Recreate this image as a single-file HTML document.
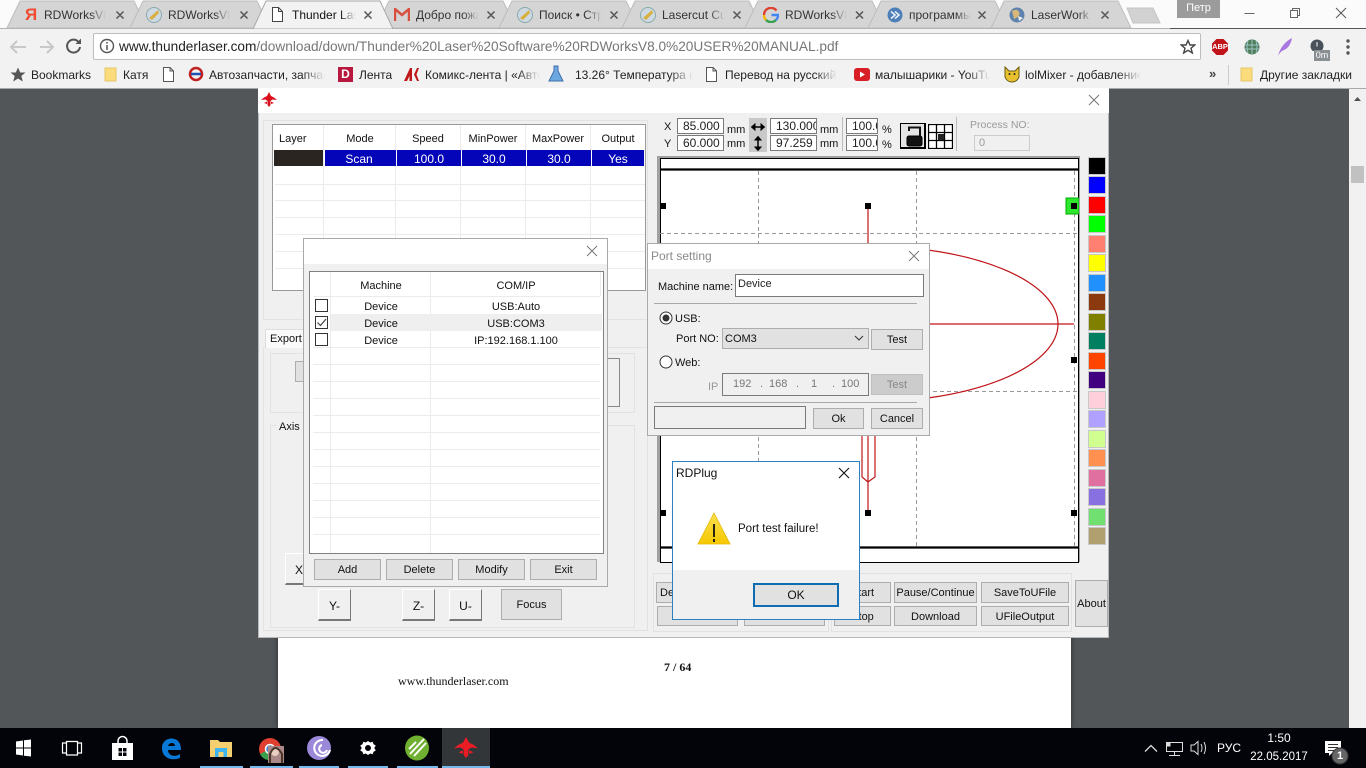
<!DOCTYPE html>
<html><head><meta charset="utf-8"><title>Thunder Laser</title>
<style>
html,body{margin:0;padding:0;width:1366px;height:768px;overflow:hidden;background:#525659}
body{position:relative;font-family:"Liberation Sans","Noto Sans CJK SC",sans-serif;font-size:11px;color:#111}
div,span,svg{position:absolute;box-sizing:border-box}
.t{white-space:nowrap;line-height:14px}
.c{text-align:center}
.b{background:#e1e1e1;border:1px solid #adadad;text-align:center;white-space:nowrap;font-size:11px;color:#111}
.i{background:#fff;border:1px solid #7a7a7a;font-size:12px;line-height:15px;color:#222;white-space:nowrap;overflow:hidden;padding-left:4px}
.tab{font-size:12px;line-height:14px;top:8px;white-space:nowrap;overflow:hidden;color:#333;-webkit-mask-image:linear-gradient(90deg,#000 75%,transparent);mask-image:linear-gradient(90deg,#000 75%,transparent)}
.bm{font-size:12px;line-height:14px;top:68px;white-space:nowrap;overflow:hidden;color:#222}
.f{-webkit-mask-image:linear-gradient(90deg,#000 80%,transparent);mask-image:linear-gradient(90deg,#000 80%,transparent)}
.g3{border:1px solid #e2e2e2}
.m{background:#000;width:6px;height:6px}
.sw{left:1088px;width:18px;height:18px;border:1px solid #c8c8c8}
.x3d{background:#f0f0f0;border-top:1px solid #fff;border-left:1px solid #fff;border-right:1px solid #777;border-bottom:2px solid #777;text-align:center;line-height:32px;font-size:12px}
</style></head><body>

<!-- Chrome frame -->
<div style="left:0;top:0;width:1366px;height:28px;background:#fbfbfb"></div>
<svg style="left:0;top:0" width="1170" height="29" viewBox="0 0 1170 29">
<g fill="#d5d5d5" stroke="#bdbdbd" stroke-width="1">
<path d="M7 28 L20 1 H134 L147 28Z"/>
<path d="M130 28 L143 1 H257 L270 28Z"/>
<path d="M376 28 L389 1 H503 L516 28Z"/>
<path d="M499 28 L512 1 H626 L639 28Z"/>
<path d="M622 28 L635 1 H749 L762 28Z"/>
<path d="M745 28 L758 1 H872 L885 28Z"/>
<path d="M868 28 L881 1 H995 L1008 28Z"/>
<path d="M991 28 L1004 1 H1118 L1131 28Z"/>
<path d="M1127 8 H1153 L1160 23 H1133Z" fill="#d2d2d2" stroke="#c4c4c4"/>
</g>
<path d="M0 28.500H1170" stroke="#b4b4b4"/>
<path d="M253 29 L266 1 H380 L393 29Z" fill="#f2f2f2" stroke="#a8a8a8"/>
</svg>
<!-- tab icons -->
<div class="t" style="left:25px;top:6px;font-size:17px;line-height:18px;color:#f04a30;font-weight:bold">Я</div>
<svg style="left:146px;top:7px" width="16" height="16"><circle cx="8" cy="8" r="7.500" fill="#cfd9e4" stroke="#8aa"/><path d="M3 11 L12 3 L13 6 L6 13Z" fill="#d8b040"/></svg>
<svg style="left:270px;top:7px" width="14" height="16"><path d="M2.500.5H8.500L12.500 4.500V14.500H2.500Z M8.500.5V4.500H12.500" fill="#fff" stroke="#444"/></svg>
<svg style="left:394px;top:8px" width="16" height="13"><path d="M1 13V1L8 7L15 1V13" fill="none" stroke="#d85040" stroke-width="2.500"/></svg>
<svg style="left:517px;top:7px" width="16" height="16"><circle cx="8" cy="8" r="7.500" fill="#cfd9e4" stroke="#8aa"/><path d="M3 11 L12 3 L13 6 L6 13Z" fill="#d8b040"/></svg>
<svg style="left:640px;top:7px" width="16" height="16"><circle cx="8" cy="8" r="7.500" fill="#cfd9e4" stroke="#8aa"/><path d="M3 11 L12 3 L13 6 L6 13Z" fill="#d8b040"/></svg>
<svg style="left:763px;top:7px" width="16" height="16" viewBox="0 0 16 16"><path d="M13.500 3.500A7 7 0 0 0 1 8" fill="none" stroke="#e04030" stroke-width="2.400"/><path d="M1 8A7 7 0 0 0 3 13" fill="none" stroke="#f4b400" stroke-width="2.400"/><path d="M3 13A7 7 0 0 0 13 13" fill="none" stroke="#34a050" stroke-width="2.400"/><path d="M13 13A7 7 0 0 0 15 8H8.500" fill="none" stroke="#4285f4" stroke-width="2.400"/></svg>
<svg style="left:887px;top:7px" width="16" height="16"><circle cx="8" cy="8" r="7.500" fill="#4f7fb8"/><path d="M4 4.500L8 8L4 11.500M8 4.500L12 8L8 11.500" fill="none" stroke="#e8eef8" stroke-width="1.600"/></svg>
<svg style="left:1009px;top:7px" width="16" height="16"><circle cx="8" cy="8" r="7.500" fill="#5f83ac"/><path d="M3 4Q8 1 10 5T5 12Z" fill="#d8b878"/><path d="M9 9L14 11L10 14Z" fill="#eee"/></svg>
<!-- tab text -->
<span class="tab" style="left:44px;width:62px">RDWorksV8.0</span>
<span class="tab" style="left:168px;width:62px">RDWorksV8.0</span>
<span class="tab" style="left:292px;width:64px;color:#111">Thunder Laser</span>
<span class="tab" style="left:416px;width:63px">Добро пожаловать</span>
<span class="tab" style="left:539px;width:63px">Поиск • Страницы</span>
<span class="tab" style="left:662px;width:63px">Lasercut Cut</span>
<span class="tab" style="left:785px;width:62px">RDWorksV8.0</span>
<span class="tab" style="left:909px;width:62px">программы для</span>
<span class="tab" style="left:1031px;width:62px">LaserWork 6</span>
<svg style="left:0;top:0" width="1120" height="28">
<g stroke="#555" stroke-width="1.500" fill="none">
<path d="M116.500 11.500l7 7m0-7l-7 7M240.500 11.500l7 7m0-7l-7 7M364.500 11.500l7 7m0-7l-7 7M487.500 11.500l7 7m0-7l-7 7M610.500 11.500l7 7m0-7l-7 7M733.500 11.500l7 7m0-7l-7 7M856 11.500l7 7m0-7l-7 7M978.500 11.500l7 7m0-7l-7 7M1101.500 11.500l7 7m0-7l-7 7"/>
</g></svg>
<!-- user + window controls -->
<div class="c" style="left:1177px;top:0;width:43px;height:18px;background:#9b9b9b;color:#fff;font-size:11px;line-height:17px">Петр</div>
<svg style="left:1230px;top:0" width="130" height="26" fill="none" stroke="#666"><path d="M14.500 13.500H24.500"/><path d="M60.500 10.500V17.500H67.500V10.500ZM62.500 10.500V8.500H69.500V15.500H67.500"/><path d="M106 8L116 18M116 8L106 18" stroke="#555"/></svg>

<!-- Toolbar -->
<div style="left:0;top:29px;width:1366px;height:59px;background:#f2f2f2"></div>
<div style="left:0;top:88px;width:1366px;height:1px;background:#a8a8a8"></div>
<svg style="left:0;top:30px" width="90" height="30" fill="none"><path d="M26 17H12M17 11L11 17L17 23" stroke="#c8c8c8" stroke-width="2"/><path d="M40 17H53M47 11L53 17L47 23" stroke="#c8c8c8" stroke-width="2"/><path d="M79 12.500A6.500 6.500 0 1 0 80 17" stroke="#555" stroke-width="2"/><path d="M81 8.500V14H75.500Z" fill="#555"/></svg>
<div style="left:93px;top:33px;width:1108px;height:27px;background:#fff;border:1px solid #bdbdbd;border-radius:2px"></div>
<svg style="left:99px;top:38px" width="16" height="16"><circle cx="8" cy="8" r="6.500" fill="none" stroke="#555" stroke-width="1.400"/><path d="M8 7V12M8 4V5.600" stroke="#555" stroke-width="1.500"/></svg>
<div class="t" id="url" style="left:119px;top:38px;font-size:13.670px;line-height:17px;color:#777"><span style="position:static;color:#222">www.thunderlaser.com</span>/download/down/Thunder%20Laser%20Software%20RDWorksV8.0%20USER%20MANUAL.pdf</div>
<svg style="left:1180px;top:39px" width="16" height="16"><path d="M8 1.500L10 6H14.800L11 9.200L12.300 14L8 11.300L3.700 14L5 9.200L1.200 6H6Z" fill="none" stroke="#444" stroke-width="1.400"/></svg>
<svg style="left:1211px;top:38px" width="18" height="18"><path d="M5.500 1H12.500L17 5.500V12.500L12.500 17H5.500L1 12.500V5.500Z" fill="#c0141a"/></svg>
<div class="c" style="left:1211px;top:42px;width:18px;color:#fff;font-size:7.500px;font-weight:bold;line-height:10px">ABP</div>
<svg style="left:1244px;top:39px" width="16" height="16"><circle cx="8" cy="8" r="7.500" fill="#4f7f5a"/><path d="M1 6H15M1 10H15M8 1V15M4 2Q2 8 4 14M12 2Q14 8 12 14" stroke="#9fc0c8" fill="none"/></svg>
<svg style="left:1277px;top:37px" width="16" height="20"><path d="M15 1C9 4 3 10 1 19C3 15 5 14 7 13C12 11 14 6 15 1Z" fill="#a878e0"/></svg>
<svg style="left:1310px;top:39px" width="16" height="12"><circle cx="7" cy="7" r="6.500" fill="#49525a"/><path d="M7 3V7.500" stroke="#fff"/></svg>
<div class="c" style="left:1314px;top:50px;width:16px;height:11px;background:#8a8f94;color:#fff;font-size:9px;line-height:11px">0m</div>
<svg style="left:1346px;top:38px" width="4" height="18"><circle cx="2" cy="3" r="1.700" fill="#555"/><circle cx="2" cy="9" r="1.700" fill="#555"/><circle cx="2" cy="15" r="1.700" fill="#555"/></svg>

<!-- Bookmarks -->
<svg style="left:10px;top:67px" width="16" height="15"><path d="M8 .5L10.200 5.500H15.500L11.300 9L12.800 14.500L8 11.500L3.200 14.500L4.700 9L.5 5.500H5.800Z" fill="#555"/></svg>
<span class="bm" style="left:31px">Bookmarks</span>
<svg style="left:104px;top:67px" width="13" height="15"><path d="M1 1H9V1H12V14H1Z" fill="#fbdc7c" stroke="#e6c468"/></svg>
<span class="bm" style="left:123px">Катя</span>
<svg style="left:162px;top:67px" width="13" height="15"><path d="M1.500.5H8L11.500 4V14.500H1.500ZM8 .5V4H11.500" fill="#fff" stroke="#555"/></svg>
<svg style="left:188px;top:66px" width="16" height="16"><circle cx="8" cy="8" r="6" fill="none" stroke="#c02020" stroke-width="2.500"/><path d="M3 8H13" stroke="#2050b0" stroke-width="2.500"/></svg>
<span class="bm f" style="left:209px;width:116px">Автозапчасти, запчасти</span>
<div style="left:338px;top:67px;width:15px;height:15px;background:#b81840;color:#fff;font-size:12px;font-weight:bold;line-height:15px;text-align:center">D</div>
<span class="bm" style="left:359px">Лента</span>
<svg style="left:404px;top:68px" width="16" height="13"><path d="M0 13L6 0H8V13H5.500V8L3 13ZM15 0H13L10 6.500L13 13H15L12.500 6.500Z" fill="#c01818"/></svg>
<span class="bm f" style="left:425px;width:115px">Комикс-лента | «Автор»</span>
<svg style="left:548px;top:65px" width="16" height="18"><path d="M6 1H10V6L15 16H1L6 6Z" fill="#6ea8e0" stroke="#3d6ea8"/></svg>
<span class="bm f" style="left:575px;width:118px">13.26° Температура в городе</span>
<svg style="left:705px;top:67px" width="13" height="15"><path d="M1.500.5H8L11.500 4V14.500H1.500ZM8 .5V4H11.500" fill="#fff" stroke="#555"/></svg>
<span class="bm f" style="left:725px;width:112px">Перевод на русский</span>
<svg style="left:854px;top:68px" width="16" height="13"><rect width="16" height="13" rx="3" fill="#d81f26"/><path d="M6 3.500V9.500L11 6.500Z" fill="#fff"/></svg>
<span class="bm f" style="left:875px;width:115px">малышарики - YouTube</span>
<svg style="left:1004px;top:66px" width="16" height="17"><path d="M1 1L5 5H11L15 1V11Q13 16 8 16T1 11Z" fill="#e8c030" stroke="#6a5a10"/><circle cx="5.500" cy="8" r="1" fill="#222"/><circle cx="10.500" cy="8" r="1" fill="#222"/></svg>
<span class="bm f" style="left:1025px;width:116px">lolMixer - добавление</span>
<div class="t" style="left:1209px;top:67px;font-size:13px;font-weight:bold;color:#444">»</div>
<div style="left:1228px;top:65px;width:1px;height:20px;background:#ccc"></div>
<svg style="left:1240px;top:67px" width="13" height="15"><path d="M1 1H9V1H12V14H1Z" fill="#fbdc7c" stroke="#e6c468"/></svg>
<span class="bm" style="left:1260px">Другие закладки</span>

<!-- PDF page -->
<div style="left:278px;top:630px;width:793px;height:98px;background:#fff;box-shadow:0 0 5px rgba(0,0,0,.5)"></div>
<div class="t" style="left:664px;top:660px;font:bold 12px/14px 'Liberation Serif',serif;color:#111">7 / 64</div>
<div class="t" style="left:398px;top:674px;font:12px/14px 'Liberation Serif',serif;color:#111">www.thunderlaser.com</div>
<!-- scrollbar -->
<div style="left:1349px;top:89px;width:17px;height:639px;background:#f1f1f1"></div>
<svg style="left:1353px;top:96px" width="9" height="6"><path d="M4.500 1L8 5H1Z" fill="#505050"/></svg>
<div style="left:1351px;top:166px;width:13px;height:17px;background:#c1c1c1"></div>

<!-- RDWorks main window -->
<div style="left:258px;top:88px;width:851px;height:550px;background:#f0f0f0;border:1px solid #b8b8b8;border-top:0"></div>
<div style="left:258px;top:88px;width:851px;height:25px;background:#fff"></div>
<svg style="left:261px;top:92px" width="16" height="15" viewBox="0 0 16 15"><path d="M8 0L10 4L13 5.500L16 8L11.500 7.500L9.500 9L9.500 13L8 15L6.500 13L6.500 9L4.500 7.500L0 8L3 5.500L6 4Z" fill="#d8101c"/><path d="M3 11L6 9.500V12ZM13 11L10 9.500V12Z" fill="#d8101c"/></svg>
<svg style="left:1088px;top:94px" width="12" height="12"><path d="M1 1L11 11M11 1L1 11" stroke="#777" fill="none"/></svg>

<!-- left top group & table -->
<div class="g3" style="left:263px;top:120px;width:385px;height:200px"></div>
<div style="left:272px;top:124px;width:374px;height:167px;background:#fff;border:1px solid #999"></div>
<svg style="left:273px;top:125px" width="372" height="165">
<g stroke="#ebebeb"><path d="M50.500 0V165M122.500 0V165M187.500 0V165M252.500 0V165M317.500 0V165"/><path d="M2 59.500H372M2 75.500H372M2 92.500H372M2 109.500H372M2 126.500H372M2 143.500H372"/></g>
</svg>
<div class="t" style="left:279px;top:132px">Layer</div>
<div class="t c" style="left:324px;top:132px;width:72px">Mode</div>
<div class="t c" style="left:396px;top:132px;width:64px">Speed</div>
<div class="t c" style="left:461px;top:132px;width:64px">MinPower</div>
<div class="t c" style="left:526px;top:132px;width:64px">MaxPower</div>
<div class="t c" style="left:591px;top:132px;width:54px">Output</div>
<div style="left:274px;top:150px;width:49px;height:16px;background:#2b2522"></div>
<div style="left:325px;top:150px;width:319px;height:16px;background:#0404b8"></div>
<div style="left:396px;top:150px;width:1px;height:16px;background:#fff"></div>
<div style="left:461px;top:150px;width:1px;height:16px;background:#fff"></div>
<div style="left:526px;top:150px;width:1px;height:16px;background:#fff"></div>
<div style="left:591px;top:150px;width:1px;height:16px;background:#fff"></div>
<div class="t c" style="left:325px;top:152px;width:68px;color:#fff;font-size:12px">Scan</div>
<div class="t c" style="left:397px;top:152px;width:64px;color:#fff;font-size:12px">100.0</div>
<div class="t c" style="left:462px;top:152px;width:64px;color:#fff;font-size:12px">30.0</div>
<div class="t c" style="left:527px;top:152px;width:64px;color:#fff;font-size:12px">30.0</div>
<div class="t c" style="left:592px;top:152px;width:52px;color:#fff;font-size:12px">Yes</div>

<!-- left bottom panels -->
<div class="g3" style="left:263px;top:347px;width:385px;height:284px"></div>
<div style="left:265px;top:329px;width:42px;height:19px;background:#fafafa;border:1px solid #ddd;border-bottom:0"></div>
<div class="t" style="left:270px;top:332px">Export</div>
<div class="g3" style="left:270px;top:353px;width:365px;height:60px"></div>
<div style="left:295px;top:361px;width:20px;height:21px;background:#e1e1e1;border:1px solid #adadad"></div>
<div style="left:605px;top:358px;width:15px;height:49px;background:#f0f0f0;border:1px solid #888"></div>
<div class="g3" style="left:270px;top:425px;width:365px;height:203px"></div>
<div class="t" style="left:277px;top:420px;padding:0 2px;background:#f0f0f0">Axis Move</div>
<div class="x3d" style="left:285px;top:553px;width:33px;height:32px;text-align:left;padding-left:9px">X-</div>
<div class="x3d" style="left:318px;top:589px;width:33px;height:32px">Y-</div>
<div class="x3d" style="left:402px;top:589px;width:33px;height:32px">Z-</div>
<div class="x3d" style="left:449px;top:589px;width:33px;height:32px">U-</div>
<div class="b" style="left:501px;top:589px;width:61px;height:31px;line-height:31px">Focus</div>

<!-- Right top controls -->
<div class="t" style="left:664px;top:120px">X</div>
<div class="t" style="left:664px;top:137px">Y</div>
<div class="i" style="left:677px;top:118px;width:47px;height:16px;padding-left:5px">85.000</div>
<div class="i" style="left:677px;top:135px;width:47px;height:16px;padding-left:5px">60.000</div>
<div class="t" style="left:727px;top:123px">mm</div>
<div class="t" style="left:727px;top:137px">mm</div>
<div style="left:749px;top:118px;width:18px;height:34px;background:#c9c9c9"></div>
<svg style="left:749px;top:118px" width="18" height="34" fill="#000" stroke="#000"><path d="M4 9H14" stroke-width="1.500"/><path d="M6 6L2.500 9L6 12ZM12 6L15.500 9L12 12Z"/><path d="M9 21V31" stroke-width="1.500"/><path d="M6 22L9 18.500L12 22ZM6 29L9 32.500L12 29Z"/></svg>
<div class="i" style="left:770px;top:118px;width:47px;height:16px;padding-left:5px">130.000</div>
<div class="i" style="left:770px;top:135px;width:47px;height:16px;padding-left:5px">97.259</div>
<div class="t" style="left:820px;top:123px">mm</div>
<div class="t" style="left:820px;top:137px">mm</div>
<div style="left:842px;top:117px;width:1px;height:34px;background:#bbb"></div>
<div class="i" style="left:846px;top:118px;width:32px;height:16px;padding-left:5px">100.00</div>
<div class="i" style="left:846px;top:135px;width:32px;height:16px;padding-left:5px">100.00</div>
<div class="t" style="left:882px;top:123px">%</div>
<div class="t" style="left:882px;top:138px">%</div>
<div style="left:900px;top:123px;width:26px;height:26px;background:#e4e4e4;border:1px solid #000;border-right-width:2px;border-bottom-width:2px"></div>
<svg style="left:900px;top:123px" width="26" height="26"><rect x="7" y="13" width="15" height="10" rx="2" fill="#111" stroke="#000"/><path d="M9 8V4.500H20V13" fill="none" stroke="#111" stroke-width="2"/></svg>
<svg style="left:928px;top:124px" width="25" height="25"><rect width="25" height="25" fill="#fff"/><path d="M.5.5H24.500V24.500H.5ZM8.500.5V24.500M16.500.5V24.500M.5 8.500H24.500M.5 16.500H24.500" fill="none" stroke="#000" stroke-width="1.300"/><rect x="10" y="10" width="6" height="6" fill="#222"/></svg>
<div style="left:956px;top:117px;width:1px;height:34px;background:#bbb"></div>
<div class="t" style="left:970px;top:118px;color:#9a9a9a;font-size:10.500px">Process NO:</div>
<div style="left:974px;top:135px;width:56px;height:16px;background:#f0f0f0;border:1px solid #ccc;color:#999;font-size:11px;line-height:15px;padding-left:4px">0</div>

<!-- Canvas -->
<div style="left:657px;top:156px;width:423px;height:406px;background:#a0a0a0"></div>
<div style="left:660px;top:158px;width:419px;height:405px;background:#fff;border:1px solid #000;border-width:1px"></div>
<svg style="left:660px;top:158px" width="419" height="405">
<path d="M0 11.500H419M0 389.500H419" stroke="#000" stroke-width="2.200"/>
<g stroke="#999" stroke-dasharray="4 3" fill="none"><path d="M98.500 13V388M256.500 13V390M414.500 13V388M0 75.500H419M0 233.500H419"/></g>
<g fill="none" stroke="#c01418" stroke-width="1.200"><ellipse cx="208" cy="166" rx="190" ry="78"/><path d="M208 48V88M18 166H414"/><path d="M202 270V319L208 324L215 319V270M208 270V355"/></g>
<rect x="406" y="40" width="13" height="16" fill="#2ee82e" stroke="#0a0"/>
</svg>
<div class="m" style="left:660px;top:203px"></div><div class="m" style="left:865px;top:203px"></div><div class="m" style="left:1071px;top:203px"></div>
<div class="m" style="left:1071px;top:357px"></div>
<div class="m" style="left:660px;top:510px"></div><div class="m" style="left:865px;top:510px"></div><div class="m" style="left:1071px;top:510px"></div>

<!-- Palette -->
<div class="sw" style="top:157px;background:#000"></div>
<div class="sw" style="top:176px;background:#0000ff"></div>
<div class="sw" style="top:196px;background:#ff0000"></div>
<div class="sw" style="top:215px;background:#00ff00"></div>
<div class="sw" style="top:235px;background:#ff8070"></div>
<div class="sw" style="top:254px;background:#ffff00"></div>
<div class="sw" style="top:274px;background:#2090ff"></div>
<div class="sw" style="top:293px;background:#8b3a10"></div>
<div class="sw" style="top:313px;background:#808000"></div>
<div class="sw" style="top:332px;background:#008060"></div>
<div class="sw" style="top:352px;background:#ff4500"></div>
<div class="sw" style="top:371px;background:#400080"></div>
<div class="sw" style="top:391px;background:#ffd0dc"></div>
<div class="sw" style="top:410px;background:#b0a0ff"></div>
<div class="sw" style="top:430px;background:#d0ff90"></div>
<div class="sw" style="top:449px;background:#ff9050"></div>
<div class="sw" style="top:469px;background:#e070a0"></div>
<div class="sw" style="top:488px;background:#8870e0"></div>
<div class="sw" style="top:508px;background:#70e070"></div>
<div class="sw" style="top:527px;background:#b0a070"></div>

<!-- bottom right buttons -->
<div class="g3" style="left:653px;top:573px;width:176px;height:59px"></div>
<div class="g3" style="left:831px;top:573px;width:241px;height:59px"></div>
<div class="b" style="left:656px;top:582px;width:60px;height:21px;line-height:21px;text-align:left;padding-left:3px">Dev</div>
<div class="b" style="left:657px;top:606px;width:81px;height:20px"></div>
<div class="b" style="left:744px;top:606px;width:81px;height:20px"></div>
<div class="b" style="left:834px;top:582px;width:57px;height:21px;line-height:21px">Start</div>
<div class="b" style="left:834px;top:606px;width:57px;height:20px;line-height:20px">Stop</div>
<div class="b" style="left:894px;top:582px;width:83px;height:21px;line-height:21px">Pause/Continue</div>
<div class="b" style="left:894px;top:606px;width:83px;height:20px;line-height:20px">Download</div>
<div class="b" style="left:981px;top:582px;width:88px;height:21px;line-height:21px">SaveToUFile</div>
<div class="b" style="left:981px;top:606px;width:88px;height:20px;line-height:20px">UFileOutput</div>
<div class="b" style="left:1075px;top:580px;width:33px;height:47px;line-height:47px">About</div>

<!-- Machine dialog -->
<div style="left:303px;top:238px;width:305px;height:349px;background:#f0f0f0;border:1px solid #aaa"></div>
<div style="left:304px;top:239px;width:303px;height:25px;background:#fff"></div>
<svg style="left:586px;top:245px" width="12" height="12"><path d="M1 1L11 11M11 1L1 11" stroke="#777"/></svg>
<div style="left:309px;top:271px;width:295px;height:283px;background:#fff;border:1px solid #808080"></div>
<svg style="left:310px;top:272px" width="293" height="281"><g stroke="#ebebeb"><path d="M20.500 0V281M120.500 0V281M290.500 0V24"/><path d="M3 24.500H290M3 75.500H290M3 92.500H290M3 109.500H290M3 126.500H290M3 143.500H290M3 160.500H290M3 177.500H290M3 194.500H290M3 211.500H290M3 228.500H290M3 245.500H290M3 262.500H290"/></g></svg>
<div style="left:331px;top:314px;width:271px;height:17px;background:#efefef"></div>
<div class="t c" style="left:331px;top:279px;width:100px">Machine</div>
<div class="t c" style="left:431px;top:279px;width:170px">COM/IP</div>
<div class="t c" style="left:331px;top:300px;width:100px">Device</div>
<div class="t c" style="left:331px;top:317px;width:100px">Device</div>
<div class="t c" style="left:331px;top:334px;width:100px">Device</div>
<div class="t c" style="left:431px;top:300px;width:170px">USB:Auto</div>
<div class="t c" style="left:431px;top:317px;width:170px">USB:COM3</div>
<div class="t c" style="left:431px;top:334px;width:170px">IP:192.168.1.100</div>
<div style="left:315px;top:299px;width:13px;height:13px;background:#fff;border:1px solid #333"></div>
<div style="left:315px;top:316px;width:13px;height:13px;background:#fff;border:1px solid #333"></div>
<div style="left:315px;top:333px;width:13px;height:13px;background:#fff;border:1px solid #333"></div>
<svg style="left:315px;top:316px" width="13" height="13"><path d="M2.500 6.500L5.500 9.500L11 3" fill="none" stroke="#444" stroke-width="1.200"/></svg>
<div class="b" style="left:314px;top:559px;width:67px;height:21px;line-height:21px">Add</div>
<div class="b" style="left:386px;top:559px;width:67px;height:21px;line-height:21px">Delete</div>
<div class="b" style="left:458px;top:559px;width:67px;height:21px;line-height:21px">Modify</div>
<div class="b" style="left:530px;top:559px;width:67px;height:21px;line-height:21px">Exit</div>

<!-- Port setting dialog -->
<div style="left:647px;top:243px;width:283px;height:193px;background:#f0f0f0;border:1px solid #aaa"></div>
<div style="left:648px;top:244px;width:281px;height:25px;background:#fff"></div>
<div class="t" style="left:651px;top:249px;font-size:12px;color:#8a8a8a">Port setting</div>
<svg style="left:908px;top:250px" width="12" height="12"><path d="M1 1L11 11M11 1L1 11" stroke="#777"/></svg>
<div class="t" style="left:658px;top:280px">Machine name:</div>
<div class="i" style="left:735px;top:274px;width:189px;height:23px;line-height:19px;padding-left:2px;font-size:11px">Device</div>
<div style="left:654px;top:303px;width:263px;height:1px;background:#a8a8a8"></div>
<svg style="left:659px;top:311px" width="14" height="14"><circle cx="7" cy="7" r="6" fill="#fff" stroke="#333"/><circle cx="7" cy="7" r="3.500" fill="#333"/></svg>
<div class="t" style="left:675px;top:312px">USB:</div>
<div class="t" style="left:676px;top:332px">Port NO:</div>
<div style="left:722px;top:328px;width:147px;height:21px;background:#e1e1e1;border:1px solid #adadad"></div>
<div class="t" style="left:725px;top:332px">COM3</div>
<svg style="left:854px;top:335px" width="10" height="7"><path d="M1 1L5 5L9 1" fill="none" stroke="#333"/></svg>
<div class="b" style="left:871px;top:329px;width:52px;height:21px;line-height:21px">Test</div>
<svg style="left:659px;top:355px" width="14" height="14"><circle cx="7" cy="7" r="6" fill="#fff" stroke="#333"/></svg>
<div class="t" style="left:675px;top:356px">Web:</div>
<div class="t" style="left:708px;top:380px;color:#999">IP</div>
<div style="left:722px;top:373px;width:147px;height:23px;background:#f0f0f0;border:1px solid #7a7a7a"></div>
<div class="t" style="left:733px;top:377px;color:#777">192</div>
<div class="t" style="left:760px;top:377px;color:#777">.</div>
<div class="t" style="left:769px;top:377px;color:#777">168</div>
<div class="t" style="left:796px;top:377px;color:#777">.</div>
<div class="t" style="left:811px;top:377px;color:#777">1</div>
<div class="t" style="left:832px;top:377px;color:#777">.</div>
<div class="t" style="left:841px;top:377px;color:#777">100</div>
<div class="b" style="left:871px;top:374px;width:52px;height:21px;line-height:21px;background:#ccc;border-color:#bfbfbf;color:#888">Test</div>
<div style="left:654px;top:402px;width:263px;height:1px;background:#a8a8a8"></div>
<div style="left:654px;top:406px;width:152px;height:23px;background:#f0f0f0;border:1px solid #7a7a7a"></div>
<div class="b" style="left:813px;top:408px;width:51px;height:21px;line-height:21px">Ok</div>
<div class="b" style="left:871px;top:408px;width:52px;height:21px;line-height:21px">Cancel</div>

<!-- RDPlug message box -->
<div style="left:672px;top:461px;width:188px;height:159px;background:#f0f0f0;border:1px solid #2a80c0"></div>
<div style="left:673px;top:462px;width:186px;height:108px;background:#fff"></div>
<div class="t" style="left:676px;top:466px;font-size:12px">RDPlug</div>
<svg style="left:838px;top:467px" width="12" height="12"><path d="M1 1L11 11M11 1L1 11" stroke="#111" stroke-width="1.100"/></svg>
<svg style="left:697px;top:511px" width="34" height="34" viewBox="0 0 34 34"><defs><linearGradient id="w" x1="0" y1="0" x2="0" y2="1"><stop offset="0" stop-color="#fbe050"/><stop offset="1" stop-color="#f5c800"/></linearGradient></defs><path d="M17 2L33 33H1Z" fill="url(#w)" stroke="#e6b800" stroke-width=".8"/><path d="M17 13V26M17 28V31" stroke="#111" stroke-width="1.800"/></svg>
<div class="t" style="left:738px;top:522px;font-size:11.500px">Port test failure!</div>
<div class="b" style="left:753px;top:583px;width:86px;height:24px;border:2px solid #0f6cb0;line-height:21px;font-size:12px">OK</div>

<!-- Taskbar -->
<div style="left:0;top:728px;width:1366px;height:40px;background:#030409"></div>
<div style="left:442px;top:728px;width:48px;height:40px;background:#333639"></div>
<svg style="left:0;top:728px" width="500" height="40" viewBox="0 0 500 40">
<path d="M16 13.500L23 12.500V19.500H16ZM24 12.300L31 11.500V19.500H24ZM16 20.500H23V27.500L16 26.500ZM24 20.500H31V28.500L24 27.700Z" fill="#fff"/>
<path d="M66 15H62.500V25H66M78 15H81.500V25H78M66.500 13.500H77.500V27H66.500Z" fill="none" stroke="#fff" stroke-width="1.200"/>
<path d="M112 15H133V32H112Z" fill="#fff"/><path d="M118 15V13A4.500 4.500 0 0 1 127 13V15" fill="none" stroke="#fff" stroke-width="1.500"/>
<path d="M118.500 20H122V23.500H118.500ZM123 20H126.500V23.500H123ZM118.500 24.500H122V28H118.500ZM123 24.500H126.500V28H123Z" fill="#030409"/>
<path d="M162 20C162 13 168 10 172 10.500C178 11 181 15 181 22H168C168 27 174 30 180 26V30C173 33 162 31 162 20ZM168 18H175C175 14 169 14 168 18Z" fill="#0a78d7"/>
<path d="M210 12H218L220 14H232V29H210Z" fill="#f4d070"/><path d="M215 20H227V29H223.500V24H218.500V29H215Z" fill="#3db4f0"/>
<circle cx="270" cy="21" r="11" fill="#e04030"/><path d="M270 21L260 26A11 11 0 0 0 275 31Z" fill="#3aa050"/><path d="M270 21L281 19A11 11 0 0 1 275 31Z" fill="#f4c020"/><circle cx="270" cy="21" r="4.500" fill="#3c80d0" stroke="#fff" stroke-width="1.500"/>
<rect x="268" y="18" width="16" height="17" fill="#a88"/><circle cx="275" cy="24" r="4" fill="#e8d0c0"/><path d="M270 35V26Q275 14 282 26V35" fill="none" stroke="#4a3428" stroke-width="2"/>
<circle cx="319" cy="20" r="12" fill="#9c88d8"/><path d="M323 12A8 8 0 1 0 330 22M322 17A4 4 0 1 0 327 22" fill="none" stroke="#fff" stroke-width="2"/>
<g transform="translate(368 20) scale(.78) translate(-368 -20)"><path d="M368 11L371 13L374 12L375 15L378 17L376 20L378 23L375 25L374 28L371 27L368 29L365 27L362 28L361 25L358 23L360 20L358 17L361 15L362 12L365 13Z" fill="#fff"/><circle cx="368" cy="20" r="3.800" fill="#030409"/></g>
<ellipse cx="417" cy="20" rx="12" ry="12.500" fill="#70b030"/><path d="M410 26L424 11M414 28L426 15M409 21L416 14" stroke="#fff" stroke-width="2"/>
<g transform="translate(454 9) scale(1.500 1.400)"><path d="M8 0L10 4L13 5.500L16 8L11.500 7.500L9.500 9L9.500 13L8 15L6.500 13L6.500 9L4.500 7.500L0 8L3 5.500L6 4Z" fill="#ec1c24"/><path d="M3 11L6 9.500V12ZM13 11L10 9.500V12Z" fill="#ec1c24"/></g>
</svg>
<div style="left:200px;top:766px;width:43px;height:2px;background:#76b9ed"></div>
<div style="left:250px;top:766px;width:43px;height:2px;background:#76b9ed"></div>
<div style="left:299px;top:766px;width:40px;height:2px;background:#76b9ed"></div>
<div style="left:348px;top:766px;width:40px;height:2px;background:#76b9ed"></div>
<div style="left:397px;top:766px;width:41px;height:2px;background:#76b9ed"></div>
<div style="left:442px;top:766px;width:48px;height:2px;background:#76b9ed"></div>
<svg style="left:1140px;top:738px" width="70" height="22" fill="none" stroke="#ddd"><path d="M5 13.500L11 7.500L17 13.500" stroke-width="1.300"/><path d="M26.500 4.500H42.500V13.500H26.500V4.500ZM34.500 14V17M29 17.500H40"/><rect x="27" y="5" width="3" height="3" fill="#ddd"/><path d="M51 7H54L58 3.500V16.500L54 13H51ZM61 6Q63 10 61 14M64 4Q67 10 64 16"/></svg>
<div class="t c" style="left:1215px;top:741px;width:28px;color:#fff;font-size:12px">РУС</div>
<div class="t c" style="left:1249px;top:731px;width:60px;color:#fff;font-size:12px">1:50</div>
<div class="t c" style="left:1249px;top:750px;width:60px;color:#fff;font-size:11.500px">22.05.2017</div>
<svg style="left:1325px;top:741px" width="24" height="24"><path d="M0 0H16V12H7L4 15V12H0Z" fill="#fff"/><path d="M3 3.500H13M3 6.500H13M3 9.500H13" stroke="#333"/><circle cx="15" cy="15" r="8" fill="#666" stroke="#333"/></svg>
<div class="t c" style="left:1334px;top:749px;width:12px;color:#fff;font-size:11px;font-weight:bold">1</div>
</body></html>
